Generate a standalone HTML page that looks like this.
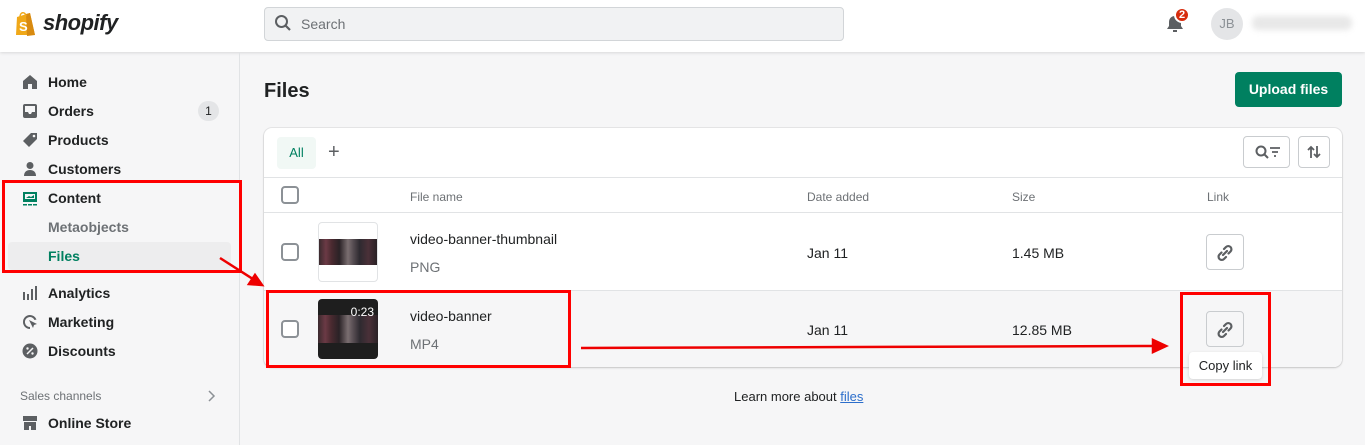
<!DOCTYPE html>
<html><head><meta charset="utf-8"><style>
*{box-sizing:border-box;margin:0;padding:0}
body{width:1365px;height:445px;overflow:hidden;background:#f6f6f7;font-family:"Liberation Sans",Arial,sans-serif;color:#202223;position:relative;font-size:14px}
.abs{position:absolute}
.top{left:0;top:0;width:1365px;height:52px;background:#fff;box-shadow:0 1px 3px rgba(0,0,0,.12)}
.side{left:0;top:52px;width:240px;height:393px;border-right:1px solid #e1e3e5}
.nav{position:absolute;left:48px;font-size:14px;font-weight:bold;color:#202223;line-height:16px}
.ic{position:absolute;left:22px;width:16px;height:16px;fill:#5c5f62}
.card{left:264px;top:128px;width:1078px;height:239px;background:#fff;border-radius:8px;box-shadow:0 0 0 1px rgba(0,0,0,.06),0 1px 2px rgba(0,0,0,.15);overflow:hidden}
.cb{position:absolute;width:18px;height:18px;border:2px solid #8c9196;border-radius:4px;background:#fff}
.th{font-size:12px;color:#6d7175;position:absolute;top:62px}
.btn{position:absolute;border:1px solid #c9cccf;border-radius:4px;background:#fff}
.red{position:absolute;border:3px solid #f00}
.thumbimg{height:26px;background:linear-gradient(90deg,#3a2a2e,#6b3a45 12%,#4a2a30 22%,#2a2226 35%,#7a6e70 50%,#5a5055 58%,#2e2a30 70%,#4a3038 85%,#2a2226)}
</style></head><body>
<div class="abs top">
 <svg class="abs" style="left:14px;top:10px" width="24" height="27" viewBox="0 0 24 27"><path d="M3 7 L16 3 L21 25 L2 25 Z" fill="#f0a818"/><path d="M12 4 L16 3 L21 25 L13 26 Z" fill="#d88a10"/><path d="M6 7 C6 2 11 1 12 6" fill="none" stroke="#f0a818" stroke-width="1.5"/><text x="5" y="21" font-size="13" font-weight="bold" fill="#fff" font-family="Liberation Sans">S</text></svg>
 <div class="abs" style="left:43px;top:10px;font-size:22px;font-weight:bold;font-style:italic;letter-spacing:-0.5px">shopify</div>
 <div class="abs" style="left:264px;top:7px;width:580px;height:34px;background:#f1f2f3;border:1px solid #d2d5d8;border-radius:4px"></div>
 <svg class="abs" style="left:274px;top:14px" width="18" height="18" viewBox="0 0 18 18"><circle cx="7.5" cy="7.5" r="5.5" fill="none" stroke="#5c5f62" stroke-width="2"/><path d="M11.5 11.5 L16 16" stroke="#5c5f62" stroke-width="2.2"/></svg>
 <div class="abs" style="left:301px;top:16px;color:#6d7175;font-size:14px">Search</div>
 <svg class="abs" style="left:1166px;top:14px" width="18" height="20" viewBox="0 0 18 20"><path d="M9 2 C5 2 3 5 3 8 L3 12 L1 15 L17 15 L15 12 L15 8 C15 5 13 2 9 2Z" fill="#5c5f62"/><rect x="7" y="16" width="4" height="2" fill="#5c5f62"/></svg>
 <div class="abs" style="left:1174px;top:7px;width:16px;height:16px;border-radius:50%;background:#d72c0d;border:2px solid #fff;color:#fff;font-size:11px;font-weight:bold;text-align:center;line-height:12px">2</div>
 <div class="abs" style="left:1211px;top:8px;width:32px;height:32px;border-radius:50%;background:#e4e5e7;color:#8c9196;font-size:13px;text-align:center;line-height:32px">JB</div>
 <div class="abs" style="left:1252px;top:16px;width:100px;height:14px;background:#e8e8e8;border-radius:6px;filter:blur(3px)"></div>
</div>
<div class="abs side"></div>
<div class="abs" style="left:8px;top:242px;width:223px;height:28px;background:#ededee;border-radius:4px"></div>
<svg class="ic" style="top:74px" viewBox="0 0 16 16"><path d="M8 1 L15 7 L15 15 L10 15 L10 10 L6 10 L6 15 L1 15 L1 7Z"/></svg>
<div class="nav" style="top:74px">Home</div>
<svg class="ic" style="top:103px" viewBox="0 0 16 16"><path d="M1 3a2 2 0 012-2h10a2 2 0 012 2v10a2 2 0 01-2 2H3a2 2 0 01-2-2zM3 3v6h3l1 2h2l1-2h3V3z"/></svg>
<div class="nav" style="top:103px">Orders</div>
<div class="abs" style="left:198px;top:101px;width:21px;height:20px;border-radius:10px;background:#e4e5e7;font-size:12px;text-align:center;line-height:20px">1</div>
<svg class="ic" style="top:132px" viewBox="0 0 16 16"><path d="M9 1 L15 1 L15 7 L7 15 L1 9Z"/><circle cx="12" cy="4" r="1.3" fill="#f6f6f7"/></svg>
<div class="nav" style="top:132px">Products</div>
<svg class="ic" style="top:161px" viewBox="0 0 16 16"><circle cx="8" cy="4.5" r="3.5"/><path d="M2 15c0-4 2.5-6 6-6s6 2 6 6z"/></svg>
<div class="nav" style="top:161px">Customers</div>
<svg class="ic" style="top:190px;fill:#008060" viewBox="0 0 16 16"><path d="M1 2h14v10H1z M3 4v5h10V4z"/><path d="M4 8l3-2 2 1 3-2v3H4z"/><rect x="1" y="14" width="4" height="1.5"/><rect x="6" y="14" width="4" height="1.5"/><rect x="11" y="14" width="4" height="1.5"/></svg>
<div class="nav" style="top:190px">Content</div>
<div class="nav" style="top:219px;color:#6d7175">Metaobjects</div>
<div class="nav" style="top:248px;color:#008060">Files</div>
<svg class="ic" style="top:285px" viewBox="0 0 16 16"><rect x="1" y="7" width="2" height="8"/><rect x="5" y="9" width="2" height="6"/><rect x="9" y="4" width="2" height="11"/><rect x="13" y="1" width="2" height="14"/></svg>
<div class="nav" style="top:285px">Analytics</div>
<svg class="ic" style="top:314px" viewBox="0 0 16 16"><path d="M8 1a7 7 0 016.5 4.5L12.5 6A5 5 0 108 13v2A7 7 0 018 1z"/><path d="M7 6l8 4-3 1-1 3z"/></svg>
<div class="nav" style="top:314px">Marketing</div>
<svg class="ic" style="top:343px" viewBox="0 0 16 16"><circle cx="8" cy="8" r="7.5"/><path d="M5 11l6-6" stroke="#f6f6f7" stroke-width="1.5"/><circle cx="5.5" cy="5.5" r="1.2" fill="#f6f6f7"/><circle cx="10.5" cy="10.5" r="1.2" fill="#f6f6f7"/></svg>
<div class="nav" style="top:343px">Discounts</div>
<div class="abs" style="left:20px;top:389px;font-size:12px;color:#6d7175">Sales channels</div>
<svg class="abs" style="left:206px;top:389px" width="10" height="14" viewBox="0 0 10 14"><path d="M3 2l5 5-5 5" fill="none" stroke="#8c9196" stroke-width="1.5"/></svg>
<svg class="ic" style="top:415px" viewBox="0 0 16 16"><path d="M1 1h14v5H1z"/><path d="M2 7h12v8H9v-4H7v4H2z"/></svg>
<div class="nav" style="top:415px">Online Store</div>

<div class="abs" style="left:264px;top:80px;font-size:20px;font-weight:bold">Files</div>
<div class="abs" style="left:1235px;top:72px;width:107px;height:35px;background:#008060;border-radius:4px;color:#fff;font-weight:bold;font-size:14px;text-align:center;line-height:35px">Upload files</div>

<div class="abs card">
 <div class="abs" style="left:13px;top:9px;width:39px;height:32px;background:#f1f8f5;border-radius:4px;color:#008060;font-size:13px;text-align:center;line-height:32px">All</div>
 <div class="abs" style="left:64px;top:13px;font-size:20px;color:#5c5f62">+</div>
 <div class="btn" style="left:979px;top:8px;width:47px;height:32px"><svg style="position:absolute;left:11px;top:8px" width="26" height="16" viewBox="0 0 26 16"><circle cx="6" cy="6" r="4.5" fill="none" stroke="#5c5f62" stroke-width="2"/><path d="M9.5 9.5L13 13" stroke="#5c5f62" stroke-width="2"/><path d="M15 3h10M17 7h6M19 11h2" stroke="#5c5f62" stroke-width="1.8"/></svg></div>
 <div class="btn" style="left:1034px;top:8px;width:32px;height:32px"><svg style="position:absolute;left:7px;top:7px" width="16" height="16" viewBox="0 0 16 16"><path d="M5 14V3M2 6l3-3 3 3M11 2v11M8 10l3 3 3-3" fill="none" stroke="#5c5f62" stroke-width="1.8"/></svg></div>
 <div class="abs" style="left:0;top:49px;width:1078px;height:36px;border-top:1px solid #e1e3e5;border-bottom:1px solid #e1e3e5;background:#fff"></div>
 <div class="cb" style="left:17px;top:58px"></div>
 <div class="th" style="left:146px">File name</div><div class="th" style="left:543px">Date added</div><div class="th" style="left:748px">Size</div><div class="th" style="left:943px">Link</div>
 <div class="abs" style="left:0;top:162px;width:1078px;height:77px;background:#f6f6f7;border-top:1px solid #e1e3e5"></div>
 <div class="cb" style="left:17px;top:115px"></div>
 <div class="abs" style="left:54px;top:94px;width:60px;height:60px;border:1px solid #e1e3e5;border-radius:4px;background:#fff;overflow:hidden"><div class="thumbimg" style="margin-top:16px"></div></div>
 <div class="abs" style="left:146px;top:103px;font-size:14px">video-banner-thumbnail</div>
 <div class="abs" style="left:146px;top:131px;font-size:14px;color:#6d7175">PNG</div>
 <div class="abs" style="left:543px;top:117px">Jan 11</div><div class="abs" style="left:748px;top:117px">1.45 MB</div>
 <div class="btn" style="left:942px;top:106px;width:38px;height:36px"></div>
 <div class="cb" style="left:17px;top:192px"></div>
 <div class="abs" style="left:54px;top:171px;width:60px;height:60px;border-radius:4px;background:#1e1e1e;overflow:hidden"><div class="thumbimg" style="margin-top:16px;height:28px"></div><div style="position:absolute;right:4px;top:6px;color:#fff;font-size:12px">0:23</div></div>
 <div class="abs" style="left:146px;top:180px;font-size:14px">video-banner</div>
 <div class="abs" style="left:146px;top:208px;font-size:14px;color:#6d7175">MP4</div>
 <div class="abs" style="left:543px;top:194px">Jan 11</div><div class="abs" style="left:748px;top:194px">12.85 MB</div>
 <div class="btn" style="left:942px;top:183px;width:38px;height:36px;background:#f6f6f7"></div>
</div>
<svg class="abs" style="left:1215px;top:243px" width="20" height="20" viewBox="0 0 20 20"><g fill="none" stroke="#5c5f62" stroke-width="2.2" stroke-linecap="round"><path d="M9 6l2-2a3 3 0 014.5 4.5l-2 2"/><path d="M11 14l-2 2a3 3 0 01-4.5-4.5l2-2"/><path d="M8 12l4-4"/></g></svg>
<svg class="abs" style="left:1215px;top:320px" width="20" height="20" viewBox="0 0 20 20"><g fill="none" stroke="#5c5f62" stroke-width="2.2" stroke-linecap="round"><path d="M9 6l2-2a3 3 0 014.5 4.5l-2 2"/><path d="M11 14l-2 2a3 3 0 01-4.5-4.5l2-2"/><path d="M8 12l4-4"/></g></svg>
<div class="abs" style="left:1189px;top:352px;width:73px;height:27px;background:#fff;border-radius:4px;box-shadow:0 1px 3px rgba(0,0,0,.15);font-size:13px;text-align:center;line-height:27px">Copy link</div>
<div class="abs" style="left:734px;top:389px;font-size:13px;color:#202223">Learn more about <span style="color:#2c6ecb;text-decoration:underline">files</span></div>

<div class="red" style="left:2px;top:180px;width:240px;height:93px"></div>
<div class="red" style="left:266px;top:290px;width:305px;height:78px"></div>
<div class="red" style="left:1180px;top:292px;width:91px;height:94px"></div>
<svg class="abs" style="left:0;top:0" width="1365" height="445"><g stroke="#e00" stroke-width="2.5" fill="#e00"><line x1="220" y1="258" x2="256" y2="281"/><path d="M262 285 L249 284 L255 275Z"/><line x1="581" y1="348" x2="1155" y2="346"/><path d="M1166 346 L1153 340 L1153 352Z"/></g></svg>
</body></html>
